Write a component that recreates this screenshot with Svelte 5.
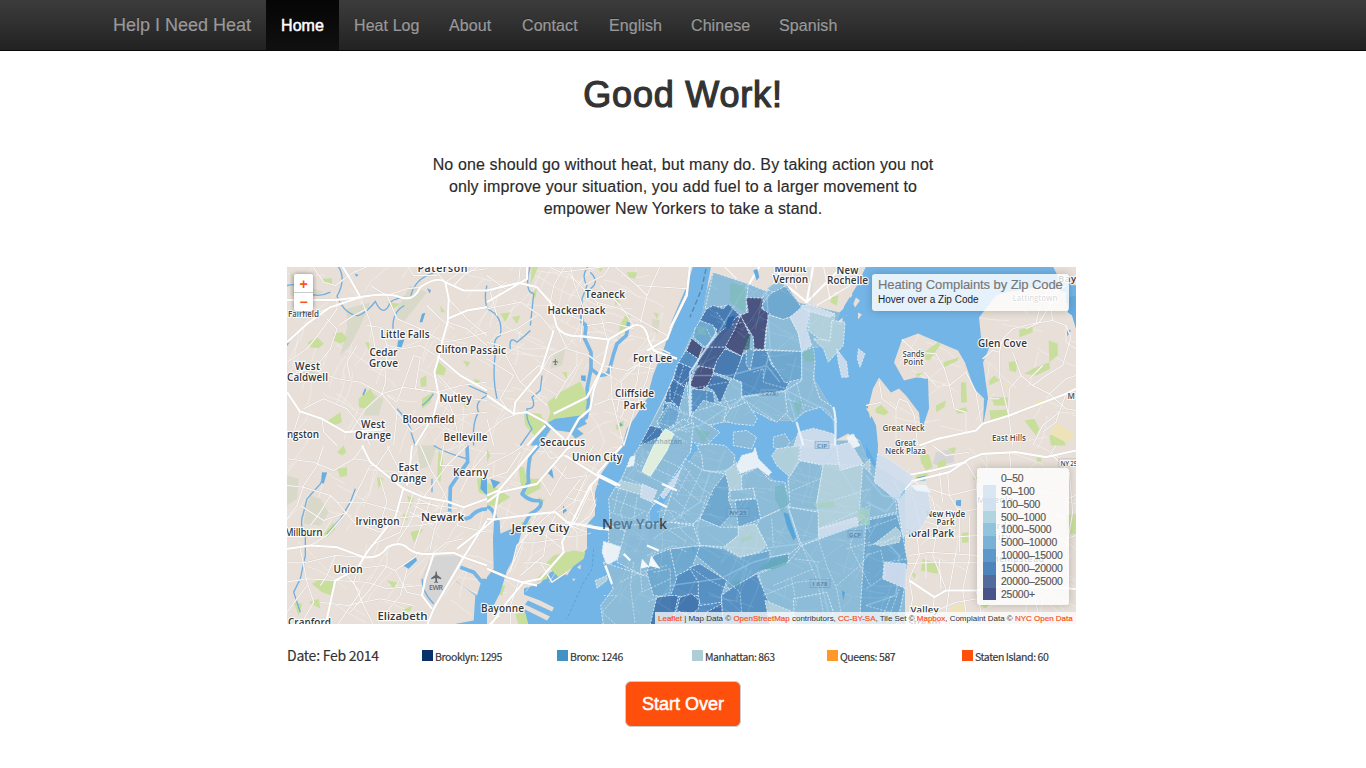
<script>
  // Label, and the width from its text's start to the next one's
  const nav = [['Home', 73], ['Heat Log', 95], ['About', 73], ['Contact', 87], ['English', 82], ['Chinese', 88], ['Spanish', 88]];

  const boroughs = [
    ['Brooklyn: 1295', '#08306b'],
    ['Bronx: 1246', '#4292c6'],
    ['Manhattan: 863', '#aecdd5'],
    ['Queens: 587', '#fe9929'],
    ['Staten Island: 60', '#ff4f0c']
  ];

  const scale = [
    ['0–50', '#f7f9fb'],
    ['50–100', '#d9e5f2'],
    ['100–500', '#d0dfee'],
    ['500–1000', '#acd3df'],
    ['1000–5000', '#8bc0da'],
    ['5000–10000', '#72aed4'],
    ['10000–15000', '#5591c6'],
    ['15000–20000', '#457db8'],
    ['20000–25000', '#486497'],
    ['25000+', '#3e4b83']
  ];

  // Fill per complaint level
  const W = '#f1f5f8', L = '#d0dded', G = '#b4d1dc', A = '#8dbcd8', B = '#6ea7cf', C = '#528dc1', D = '#4275af', E = '#465f91', F = '#434b7a';

  const bronxLand = 'M711 266H866L857 285L844 306L842 325L833 322L828 345L811 348L815 380L833 410L813 405L795 420L770 420L755 410L730 422L718 422L690 442L674 470L650 510L648 545L636 552L624 555L605 563L604 545L609 540L610 495L615 488L640 445L665 395L690 338L702 315Z';
  const islandLand = 'M979 317L981 337L991 343L983 362L988 398L983 425L984 398L974 388L965 362L958 350L939 342L918 333L902 339L894 362L904 380L916 377L928 378L929 408L921 432L919 412L906 395L899 388L891 392L879 377L873 388L868 408L876 425L878 445L877 470L866 455L860 440L848 433L835 440L825 430L800 433L787 445L798 458L788 475L787 485L777 483L767 473L737 465L733 452L710 445L695 452L683 472L660 510L657 545L642 562L627 560L625 568L610 592L602 608L604 624H1076V315L1066 302V292L1046 285L1006 292L996 295Z';

  // Each tile is drawn on its own 600 x 540 grid, a third of a pixel per unit
  const tiles = [
    {
      x: 287, y: 265,
      sage: ['180 130 250 110 220 180 190 240 160 270 180 190', '30 290 100 290 90 340 30 350', '250 380 290 400 275 450 230 450', '10 20 60 60 110 80 60 100 10 90', '370 60 420 80 350 170 320 150'],
      park: ['62 230 90 215 110 235 95 248 70 245', '138 205 165 200 182 220 160 235 140 225', '450 285 478 310 470 330 445 325', '215 400 250 370 265 395 235 430 215 425', '115 470 160 440 165 470 140 480', '405 400 440 380 430 410 405 430', '528 285 550 290 540 305', '400 340 418 330 418 362 402 364', '300 110 340 115 320 130', '460 120 475 140 462 140', '105 40 135 38 135 60 110 52', '235 230 248 230 245 255', '560 340 580 345 570 362', '525 400 545 410 535 430'],
      lake: ['333 225 352 222 342 250 330 252', '405 145 415 142 406 170 398 170', '420 68 432 74 428 84', '203 25 215 28 208 34', '234 368 238 372 230 390 226 388'],
      river: ['M152 0Q180 40 150 92Q175 150 215 150Q240 140 265 108Q290 160 310 110Q340 90 370 98Q380 40 440 22', 'M0 60Q40 50 55 78Q90 100 130 80', 'M352 120Q315 140 318 190', 'M600 60Q590 90 600 130', 'M600 390Q560 410 575 440Q555 470 560 540', 'M440 385Q420 410 405 420', 'M330 430Q370 470 375 510L385 540', 'M545 360L600 385M0 240L10 220'],
      major: ['M0 104L150 103L220 95Q300 80 340 95Q380 110 400 65Q450 30 475 50L530 75L600 75', 'M165 0L195 50L220 95', 'M475 50L485 100L482 170L465 230L455 275L442 320L455 390L440 450L385 540', 'M482 160L540 135L600 125', 'M0 380L38 437L105 460L175 500L290 492', 'M455 275L520 330L600 375', 'M0 230L60 175L130 125L220 95'],
      minor: ['M75 0L110 50L145 60L200 20L250 0', 'M150 103L150 130L100 200L60 250L0 290', 'M155 180L200 150L240 130', 'M120 160L150 190L130 250L90 300', 'M0 330L70 310L150 340L220 350L285 385L330 440L375 500', 'M220 95L250 170L265 250L250 300', 'M240 180L280 185L300 240L295 350L285 385L235 430L190 500', 'M300 90L330 160L400 190L470 230', 'M380 270L355 340L330 410L300 390', 'M380 270L400 275L385 370L450 380', 'M285 385L350 365L450 380L520 360L600 350', 'M360 0L380 30L450 30', 'M475 50L520 20L600 10', 'M475 50L430 0', 'M485 100L540 160L600 210', 'M482 170L540 190L600 240', 'M470 230L530 220L600 200', 'M40 437L20 500L0 520', 'M50 430L110 400L180 430L220 480L250 540', 'M105 460L110 500L150 540', 'M330 440L320 540', 'M375 500L420 470L500 450L600 440', 'M440 450L480 490L560 520L600 500', 'M480 400L500 450L520 540', 'M455 330L500 380L550 400L600 405', 'M300 240L350 250L400 240L455 275', 'M0 150L70 150L120 130', 'M210 240L180 290L190 340', 'M420 120L460 160L500 190', 'M250 60L300 90L360 70L400 65', 'M500 60L530 30L580 0']
    },
    {
      x: 487, y: 265,
      sage: ['495 160 520 165 510 205 495 190', '200 270 235 250 225 300 190 310'],
      park: ['182 410 220 380 280 348 295 380 305 420 290 460 230 455 180 470 190 440', '110 440 160 445 190 500 150 520 115 480', '415 150 430 150 415 190 395 215 398 180', '420 20 450 20 445 40 425 35', '75 155 100 150 90 175', '40 145 70 140 55 170', '330 0 350 5 340 20', '385 480 410 465 410 480 390 495', '225 320 240 320 240 340', '380 90 400 110 385 120', '500 140 515 145 510 160', '135 0 155 0 130 60', '135 80 150 70 145 100'],
      lake: ['282 330 296 330 296 348 283 345', '400 470 408 480 398 482', '235 460 250 470 240 480'],
      river: ['M0 130Q50 150 40 210Q15 220 25 260Q15 340 30 400', 'M70 250Q65 210 90 230Q115 210 130 195', 'M165 330L160 375L135 395Q150 430 120 430Q115 460 135 490L100 540', 'M305 0Q280 30 300 60L285 100L285 130', 'M130 0Q110 80 140 85L130 180', 'M310 20Q340 50 310 70'],
      wide: ['M283 130L285 170L297 180L293 220L312 260L312 310L300 370L305 410L298 455L275 475', 'M425 170L418 210L390 235L380 265L365 320L350 330', 'M312 310L335 328L350 330'],
      water: ['205 460 280 450 300 475 270 490 290 505 265 520 250 500 190 492 160 540 130 540 175 475'],
      major: ['M0 75L95 52L150 65L190 110L210 185Q230 215 280 212L365 222Q400 200 440 180Q475 170 485 225L500 255L570 280', 'M365 222L350 290L320 375L310 430L275 460L230 540', 'M0 390L80 445L120 440L175 470L230 520', 'M175 480L120 540', 'M200 195L160 320L85 410L80 450', 'M200 445L300 395L345 310', 'M600 85L555 180L540 220L480 255', 'M120 0L120 40L0 110'],
      minor: ['M55 70L0 30', 'M95 52L100 0', 'M190 110L200 60L235 0', 'M190 110L250 150L285 165', 'M210 185L240 250L305 270L345 300', 'M250 30L300 80L330 110L400 130L470 170L540 210', 'M250 0L260 50L290 130L280 230', 'M180 0L220 20L380 0', 'M380 0L450 60L480 90L520 0', 'M450 60L600 70', 'M440 180L400 120L340 60', 'M480 90L460 170', 'M330 110L360 220', 'M300 180L370 170L440 190', 'M0 130L100 110L160 150L200 200', 'M30 210L90 190L150 150', 'M0 230L40 240L100 350L180 420', 'M100 350L155 300L235 350L205 400', 'M160 320L190 270L240 245', 'M235 350L270 300L270 260', 'M345 300L420 315L500 270', 'M350 320L400 350L450 300L500 310', 'M370 300L375 400L385 440L410 540', 'M405 350L390 440', 'M500 255L480 340L440 440L410 540', 'M460 280L450 350L400 460', 'M320 420L370 400L450 410', 'M0 500L50 460L80 450', 'M0 460L20 540', 'M290 60L350 30L370 0', 'M30 150L10 80L60 50', 'M480 255L520 250L550 265', 'M0 280L80 330L40 400L60 430']
    },
    {
      x: 287, y: 445,
      sage: ['70 150 100 160 125 200 100 240 50 235 60 180', '0 90 35 100 30 160 0 180', '390 0 450 0 430 60 400 70'],
      park: ['150 70 180 65 180 90 160 95', '150 20 170 0 178 20 165 30', '110 265 140 230 145 250 120 275', '350 205 365 210 360 225 345 220', '75 415 100 400 140 405 135 450 105 440', '270 95 290 100 275 130', '455 10 468 45 460 110 450 100', '360 150 380 160 370 185', '20 470 45 475 35 510', '570 100 600 95 600 150 575 140', '300 405 330 410 320 430', '345 495 375 480 370 498', '370 260 410 250 380 290', '65 470 95 460 100 490'],
      lake: ['105 80 120 82 110 115 102 110', '348 360 385 330 390 345 365 370', '583 98 600 95 600 150 580 130'],
      river: ['M118 80L100 115L60 160L50 200Q35 240 55 270L55 330L40 400L20 440L40 500', 'M205 130L190 170L160 220L120 265', 'M440 0Q470 20 540 40', 'M435 100L435 140', 'M405 400Q405 440 440 475'],
      wide: ['M540 0L542 50L520 80L490 125L488 200', 'M600 190Q570 190 550 215L530 222', 'M520 365L560 380L585 410'],
      water: ['505 405 565 450 560 525 480 540 600 540 600 400 585 400 570 450 510 410'],
      gray: ['425 345 450 330 520 330 525 350 440 480 405 460 405 400'],
      major: ['M0 310L70 300L150 305L230 335Q280 340 300 305Q340 285 365 310Q390 330 440 325L500 322L530 335L600 360', 'M225 0L250 50L300 90L350 130L410 155L480 168L530 185L600 160', 'M350 125L325 215L240 320L210 370L145 405L115 540', 'M600 225L530 335L440 490L420 540', 'M440 325L415 400L405 450L435 490', 'M360 120L370 50L375 0', 'M600 240L510 310'],
      minor: ['M0 40L80 50L140 75L200 40L240 45', 'M0 120L50 125L130 150L150 170L230 170L340 200', 'M110 0L90 60L50 120L30 180L0 220', 'M230 0L200 40', 'M250 60L220 120L180 200L120 270L70 300', 'M150 170L200 230L280 260L325 215', 'M280 100L300 170L280 230', 'M340 170L420 175L510 190', 'M320 220L400 210L490 200', 'M320 245L400 240L450 230', 'M380 140L340 260L250 300', 'M400 155L370 230L330 290', 'M430 165L400 250L380 310', 'M470 170L440 260L430 310', 'M380 180L450 215M390 160L465 190M370 200L440 240', 'M300 0L330 60L360 120', 'M400 0L430 70L470 140L480 168', 'M470 0L460 60L500 60', 'M410 155L480 60L540 0', 'M0 350L60 350L145 330L230 335', 'M0 410L60 400L145 405', 'M145 330L120 390L100 420', 'M40 310L60 410L80 470L40 540', 'M60 420L0 500', 'M210 370L290 360L325 375L390 330', 'M230 335L200 410L230 480L260 540', 'M145 405L240 410L300 430L400 420', 'M180 390L220 440L150 540', 'M300 305L300 360L250 430L190 500', 'M325 375L360 440L405 450', 'M360 370L340 450L280 520', 'M100 470L180 480L280 460L380 480', 'M435 325L480 290L530 280', 'M530 185L510 240L600 260', 'M310 0L270 60L250 60', 'M600 20L550 80L520 140', 'M130 150L100 200L70 240', 'M180 200L110 225L40 180']
    },
    {
      x: 487, y: 445,
      park: ['200 330 260 315 295 320 290 340 215 395 175 355', '95 60 110 65 120 100 160 100 160 130 110 155 100 110', '0 110 40 135 70 155 30 180 0 180', '35 420 55 420 45 450 30 445', '145 400 185 370 180 400 150 410', '0 10 10 30 0 50', '85 505 115 500 125 540 95 540', '225 190 240 180 235 200', '100 230 130 230 120 245', '155 155 175 165 155 175'],
      lake: ['228 180 240 195 228 205', '10 100 40 110 20 130', '180 80 200 100 195 70'],
      wide: ['M155 0L130 30Q120 80 125 110L105 145Q130 170 160 165', 'M160 165Q170 185 130 205L105 250', 'M0 184Q25 190 28 240L25 290'],
      water: ['22 215 38 225 40 265 85 245 108 240 98 280 85 330 60 375 40 440 20 480 0 500 0 395 20 370 18 280'],
      major: ['M0 150L35 135L150 0', 'M0 170L40 140L150 115L240 10L260 0', 'M0 220L20 222L150 205L205 200L240 230L340 250L370 250', 'M0 370L60 395L105 410L150 420', 'M235 30L330 90L400 125', 'M340 90L310 120L225 290L230 320L160 400L110 410', 'M0 240L20 222L35 135', 'M110 410L60 470L10 540', 'M330 85L405 0'],
      minor: ['M0 60L80 20L110 0', 'M0 100L60 80L100 20', 'M165 0L190 40L235 30', 'M180 80L160 100L190 150L240 60', 'M200 60L240 100L300 90', 'M300 90L260 170L215 200', 'M280 100L220 180L170 220L90 300L70 380', 'M320 110L270 220L230 270', 'M300 140L260 130M290 170L240 155M270 220L250 200', 'M310 120L325 180L310 210L270 240', 'M240 230L270 260L270 310M250 240L300 260', 'M150 205L120 260L80 350L60 390', 'M205 210L180 260L170 330L100 390', 'M130 240L190 280L225 310', 'M100 290L150 290L225 280', 'M110 350L160 350L190 360', 'M95 410L70 480L70 540', 'M40 510L0 540', 'M160 350L195 410L240 380', 'M320 0L290 50L230 30']
    },
    {
      x: 866, y: 265,
      park: ['175 260 215 230 225 235 190 285 178 282', '232 290 278 275 275 285 235 305', '285 350 300 350 303 410 285 412', '28 430 45 418 68 440 55 450 30 442', '268 432 300 425 305 440 275 445', '210 420 240 405 235 425 210 440', '460 192 500 183 500 200 460 215', '428 290 455 285 450 320 430 315', '475 325 500 310 550 290 552 310 510 330', '370 345 385 330 400 345 370 360', '375 395 425 395 425 420 385 420', '370 435 425 432 425 455 375 465', '548 225 575 235 575 270 550 290', '475 465 505 460 520 490 510 510', '515 110 535 100 530 130', '550 510 580 500 600 540 555 540', '148 325 170 322 155 335'],
      sand: ['0 430 20 425 15 450', '360 142 378 140 375 150', '510 405 540 400 540 415 515 420', '415 358 428 355 425 375', '550 505 570 470 630 510 600 530', '325 395 335 390 335 405'],
      lake: ['600 190 615 195 605 212', '605 95 630 90 630 190 618 150 605 140'],
      major: ['M160 540L215 520L330 495L350 475L430 450L600 385L630 370'],
      minor: ['M108 222L150 260L210 265L235 310L250 360L210 362L175 320', 'M250 360L265 430L300 440L300 500', 'M250 360L275 340L300 320L330 380L345 470', 'M40 350L48 400L90 430L100 400L125 410L145 450L155 540', 'M90 430L90 540', 'M0 420L45 410', 'M440 260L465 330L430 370L428 450', 'M350 280L380 255L400 260L410 220L440 190L500 175L560 165L600 180L615 215L590 300L540 330L500 360', 'M465 330L500 360L550 385L600 430L630 435', 'M480 190L520 170L560 110', 'M600 180L600 230L630 250', 'M400 260L400 330L428 450L440 540', 'M460 440L430 450', 'M600 385L580 440L530 480L500 540', 'M550 385L600 340L630 330', 'M510 175L520 130L550 60', 'M560 165L550 90L600 60', 'M370 400L400 400M490 340L530 300', 'M530 500L570 470L580 440']
    },
    {
      x: 866, y: 445,
      park: ['150 90 180 80 195 95 145 110', '215 50 240 40 240 70 215 75', '288 262 312 260 312 290 288 292', '160 10 190 30 200 65 180 75 165 50', '512 35 527 35 525 48 512 48', '600 210 630 205 630 265 600 265', '170 340 215 355 215 385 165 375', '345 480 370 475 360 490', '245 10 270 5 265 25', '135 380 150 385 145 400', '320 100 345 90 340 115'],
      sand: ['260 480 295 475 290 500 250 500', '135 470 155 475 145 490', '500 520 530 515 520 540'],
      gray: ['210 20 260 10 265 50 220 60 200 55'],
      lake: ['270 165 285 163 285 182 270 180', '0 0 28 50 25 80 0 60', '155 95 180 90 178 105 150 105'],
      major: ['M100 145L145 105L250 80L310 40L350 25L450 20L540 35L630 15', 'M130 405L205 455L240 435L330 435L420 420L630 430', 'M145 110L120 90L200 75L300 50'],
      minor: ['M430 20L435 70', 'M300 50L330 100L335 180', 'M190 130L250 150L335 130', 'M145 105L200 160L215 240L200 330L240 430', 'M245 85L250 150L280 200L280 320', 'M195 195L280 200L335 190', 'M190 280L335 270', 'M130 330L190 320L335 330', 'M125 355L200 350L335 350', 'M270 320L250 430L240 500', 'M310 210L310 340L290 435L300 500', 'M150 250L160 330L130 400', 'M130 400L140 460L120 540', 'M205 455L200 500L240 540', 'M150 20L180 0M200 0L240 30L310 20', 'M550 30L570 0M560 30L600 70', 'M335 460L270 470L200 500', 'M610 80L620 200L600 320L610 430', 'M600 160L630 150M600 280L630 270', 'M215 240L150 220M230 170L220 80', 'M330 435L350 520M500 430L520 520', 'M180 330L180 400M220 340L225 430']
    }
  ];

  const labels = [
    ['Paterson', 442.5, 271.5, 50, 10.5], ['Teaneck', 605, 297.5, 40, 10], ['Hackensack', 576.5, 313.5, 58, 10], ['Little Falls', 405, 337, 49, 10],
    ['Cedar', 383.5, 355.500, 28, 10], ['Grove', 383.5, 366.5, 29, 10], ['Clifton', 451.5, 352, 32, 10], ['Passaic', 488, 353.5, 36, 10],
    ['West', 307.5, 369.5, 25, 10], ['Caldwell', 307.5, 380.5, 41, 10], ['Nutley', 455.5, 401.5, 32, 10], ['Bloomfield', 428.5, 422.5, 52, 10], ['Belleville', 465.5, 440.5, 44, 10],
    ['West', 373, 427.5, 24, 10], ['Orange', 373, 438.5, 36, 10], ['ngston', 303, 437.5, 32, 10], ['East', 408.5, 470.5, 20, 10], ['Orange', 408.5, 481.5, 36, 10],
    ['Kearny', 470.5, 475.5, 35, 10], ['Newark', 442.5, 520.5, 43, 11.5], ['Irvington', 377.5, 524.5, 44, 10], ['Millburn', 303.5, 535.5, 38, 10], ['Union', 348, 572, 29, 10],
    ['Elizabeth', 402.5, 619, 50, 11.5], ['Cranford', 309.5, 625.5, 43, 10], ['Bayonne', 502.5, 611.5, 43, 10], ['Jersey City', 540.5, 531.5, 58, 11.5],
    ['Union City', 597, 460, 50, 10], ['Secaucus', 562.5, 445.5, 45, 10], ['Fort Lee', 652.5, 361.5, 39, 10], ['Cliffside', 634.5, 396.5, 39, 10], ['Park', 634.5, 408, 22, 10],
    ['Mount', 790.5, 271.5, 32, 10], ['Vernon', 790.5, 282.5, 35, 10], ['New', 847.5, 273, 22, 10], ['Rochelle', 847.5, 283.5, 41, 10], ['Sands', 913.5, 356, 22, 8], ['Point', 913.5, 364, 20, 8],
    ['Glen Cove', 1002.5, 346.5, 49, 10], ['Great Neck', 903.5, 430, 42, 8], ['Great', 905.5, 445, 21, 8], ['Neck Plaza', 905.5, 453, 41, 8], ['East Hills', 1009, 440, 34, 8],
    ['Fairfield', 303.5, 316, 31, 8], ['Valley', 924.5, 612, 28, 9.5], ['Stream', 924.5, 625, 32, 9.5], ['Bay', 1067, 281, 18, 9.5], ['Ma', 1074, 398, 13, 8],
    ['Mineola', 995, 502, 36, 9], ['Garden', 1001, 528, 33, 9], ['City', 1001, 539, 19, 9], ['Hempstead', 1018, 561, 52, 9], ['Lattingtown', 1035, 300.5, 45, 8]
  ];
  const underLabels = [['New Hyde', 945.5, 516.5, 39, 8], ['Park', 945.5, 524.5, 18, 8], ['Floral Park', 928.5, 536.5, 51, 10]];

  const zips = [
    { x: 487, y: 265, shapes: [
      [C, '600 265 570 300 562 325 600 345 620 260'], [D, '565 330 600 345 600 390 580 375 560 415 533 408 540 380'],
      [A, '590 390 640 400 640 460 600 440 580 430'], [C, '560 415 580 420 570 450 525 455 530 415'], [B, '530 440 580 435 600 470 600 500 560 480 520 470'],
      [D, '490 480 530 490 510 530 495 560 455 545'], [B, '560 480 620 500 610 560 550 540']
    ] },
    { x: 670, y: 265, shapes: [
      [A, '130 20 235 55 228 150 200 145 170 120 105 130'], [A, '235 55 292 78 270 105 230 100'], [A, '290 70 330 40 345 60 320 85'],
      [B, '345 62 385 110 395 130 360 155 340 162 290 145 275 120 300 85'], [D, '110 130 130 120 160 130 175 115 200 140 210 150 130 250 140 190 90 165'],
      [E, '205 150 215 190 165 245 145 285 105 310 90 270 110 245 150 200 175 180'], [F, '228 96 280 98 275 130 300 145 288 190 282 252 252 250 250 215 210 150 235 140'],
      [F, '212 150 240 210 215 272 165 245 190 200'], [B, '75 190 90 165 130 180 140 210 105 245 70 215'], [F, '65 218 98 245 85 280 48 260'],
      [C, '48 255 85 280 70 310 25 290'], [D, '25 290 70 310 50 370 10 340'], [F, '90 300 130 308 128 350 90 375 60 360 75 315'], [E, '100 245 170 245 130 310 80 300'],
      [D, '165 250 215 272 210 300 190 340 130 320 140 285'], [C, '220 265 250 255 290 255 305 300 360 345 345 375 215 392 215 350 190 340'],
      [A, '295 148 340 162 360 155 385 200 395 258 285 252 290 190'], [B, '288 255 395 258 395 340 345 352 310 300'],
      [L, '360 155 395 125 420 130 410 190 425 240 395 258 385 205'], [G, '420 132 495 148 480 230 440 215 415 195'], [L, '395 120 420 118 495 145 480 155 410 135'],
      [G, '485 165 525 170 520 240 475 290 460 250 430 220 480 225'], [L, '500 250 530 290 535 335 515 335 505 290'], [L, '565 250 585 265 570 305 562 280'],
      [A, '395 258 430 245 435 290 430 340 450 400 490 425 500 470 450 425 400 440 370 470 345 440 345 375 395 345'],
      [A, '215 395 345 378 352 440 320 470 280 450 235 430'], [A, '170 350 190 340 215 355 215 400 180 430 160 390'], [D, '130 325 180 345 150 415 130 375 110 365'],
      [C, '65 370 110 375 130 380 135 410 100 430 65 445'], [A, '100 405 170 425 160 470 110 480 65 450'], [A, '180 430 230 410 262 460 250 480 195 475 160 465'],
      [D, '10 340 50 370 30 430 0 400 0 360'], [A, '50 350 60 450 45 480 15 470'], [B, '0 410 30 430 20 470 -20 500 -40 470'], [A, '-10 500 40 460 70 480 60 540 -30 560'],
      [A, '65 450 120 480 150 500 110 540 65 530'], [A, '190 500 230 495 260 515 245 550 190 540'], [A, '310 515 345 505 360 530 340 560 310 545'],
      [L, '385 500 430 488 490 505 500 545 370 545'], [W, '530 515 550 505 570 540 545 550'], [B, '230 245 252 255 240 315 228 295']
    ] },
    { x: 487, y: 445, shapes: [
      [A, '460 0 620 -70 610 20 560 90 500 180 480 140 400 110 425 50'], [W, '430 35 445 30 440 60 420 65'],
      [G, '400 105 465 120 465 150 385 130'], [A, '385 125 470 150 500 175 480 210 480 270 430 265 370 240 365 160'], [L, '465 115 510 135 495 170 460 155'],
      [A, '365 240 430 260 415 320 365 290'], [B, '425 265 485 278 475 320 410 315'], [W, '350 288 405 305 410 330 360 360 345 320'],
      [L, '585 65 590 85 530 160 520 150'], [G, '325 405 360 390 360 405 330 428']
    ] },
    { x: 670, y: 445, shapes: [
      [A, '80 0 120 -5 165 0 195 30 190 60 160 80 100 75 95 30'], [A, '45 40 100 75 165 85 135 130 120 180 70 235 0 230 -60 330 -40 270 10 130'],
      [B, '165 85 180 90 175 160 190 200 150 245 90 220 130 130'], [G, '165 80 200 50 205 85 220 95 215 135 180 135'],
      [A, '215 90 265 65 300 105 345 110 355 180 270 220 250 130 215 135'], [A, '180 135 250 128 255 158 180 165'], [B, '195 165 260 160 272 220 205 245'],
      [A, '70 235 90 220 150 245 205 245 205 270 160 305 95 300 65 270'],
      [A, '270 220 355 182 390 300 360 325 300 335 290 300 260 240'], [G, '320 10 390 0 385 50 360 95 320 60 305 30'], [A, '390 45 460 60 440 170 445 200 360 185 355 100'],
      [G, '205 245 255 235 290 300 270 318 210 335 163 305 205 270'],
      [L, '395 -20 500 0 508 75 460 58 388 45'], [G, '460 55 580 60 600 40 600 200 565 230 445 250 440 175'], [L, '500 0 540 -10 580 55 510 75'],
      [L, '445 250 560 215 565 240 447 280'], [A, '355 185 445 200 445 280 395 300'],
      [B, '95 300 163 310 210 335 300 315 300 335 355 325 355 350 265 380 180 435 150 390 65 320'], [B, '0 310 90 300 65 370 25 400 0 400'],
      [C, '60 365 90 355 170 405 155 450 155 500 85 490 80 455 0 420'], [A, '395 300 445 282 560 240 600 230 600 540 310 540 265 385 355 350'],
      [C, '180 430 260 385 300 480 300 540 155 540 155 450'], [C, '-5 455 25 450 85 450 90 480 155 470 155 540 0 540'], [A, '-130 240 0 230 70 240 90 300 0 310 -70 380 -80 390 -160 350'],
      [A, '-200 350 -80 390 0 400 0 540 -200 540 -208 480 -170 430'], [C, '0 400 60 370 85 410 85 450 0 455'], [B, '-50 330 0 310 20 400 0 455 -50 450 -70 380'], [D, '-40 455 0 450 25 450 15 500 0 540 -60 540'],
      [D, '30 455 65 445 88 465 85 490 60 510 20 495'], [D, '110 500 155 475 160 540 90 540'],
      [W, '200 60 215 30 250 20 255 5 265 40 305 80 295 90 262 65 210 85'], [G, '285 465 370 500 370 540 300 540'], [A, '370 460 470 440 490 500 470 540 375 540']
    ] },
    { x: 866, y: 445, shapes: [
      [A, '-10 60 20 90 90 170 92 200 0 220 -20 200'], [L, '35 25 60 35 145 95 105 145 95 165 25 110'], [L, '95 165 140 120 185 125 195 195 165 250 110 275'],
      [B, '0 225 92 205 110 270 125 350 115 430 105 480 90 540 -20 540'], [G, '25 295 90 245 105 262 100 290 45 302'], [L, '55 350 120 355 120 430 50 400'], [W, '135 120 180 118 195 140 150 135']
    ] }
  ];

  // Boundary lines of neighbouring zip codes, drawn over the fills
  const borders = [
    { x: 487, y: 445, d: 'M480 20L600 75M465 50L580 105M450 75L560 130M430 45L500 80M415 95L460 115M375 160L480 200M370 200L430 220L470 200M420 140L400 200L415 250M450 155L440 220L480 240M395 130L380 200M510 200Q560 180 600 230M500 280L540 250L600 290M480 330L560 300L600 320M440 350L430 420L445 540M400 410L460 380L540 360M460 370L465 440L550 400M350 450L390 450L345 500L390 540M500 380L550 370L550 440L480 470' },
    { x: 670, y: 445, d: 'M40 60L95 130L130 150M20 110L80 160L120 180M0 150L60 200M60 75L20 150M95 75L55 160L30 220M0 200L40 260L90 300M0 250L60 240M110 150L80 250L90 300M355 140L450 100M440 180L600 130M445 250L600 180M305 220L310 300M445 282L470 360L500 430L520 540M560 240L540 300L600 420M395 300L440 400L460 500M310 420L430 370M280 450L380 410L480 400M375 340L450 350M365 400L380 480M500 420L570 360L600 320M530 310L600 290M150 390L210 440L215 500M60 365L120 405L180 435' },
    { x: 670, y: 265, d: 'M0 420L60 450M10 380L50 400M30 360L60 330M65 440L200 400M110 380L110 430M170 350L60 370M220 400L320 470M250 320L280 310L280 350L350 370M140 140L170 180L220 170M110 190L125 220M20 470L60 500M0 500L40 530M350 400L440 430M380 350L400 430M80 480L120 530' },
    { x: 487, y: 265, d: 'M590 300L560 400L500 500L460 540M540 420L600 450M510 470L600 500M550 500L600 530M570 350L600 360' },
    { x: 866, y: 445, d: 'M0 250L100 215M10 300L115 270M0 330L45 315L60 390L0 430M60 350L125 340M60 540L100 430M0 480L70 500M45 300L90 270M40 540L75 450M135 130L165 250M105 145L80 100' }
  ];

  const motorways = [
    { x: 670, y: 445, d: 'M350 180L390 295L440 360L475 500M355 185L550 205L600 190M90 300L270 310L390 295L600 230M450 70L500 0M505 60L560 150L600 260M0 230L90 170L120 80L190 70M0 420L150 400L250 350L360 320' },
    { x: 670, y: 265, d: 'M60 450L60 320L140 210L230 60M0 500L90 480L220 395L350 375L450 425Q500 430 495 540M350 375L385 490L395 540M410 0L425 60L425 130L395 250L395 345L350 375M60 330L180 330L290 300L330 350M330 0L290 80L300 250L280 340' },
    { x: 866, y: 445, d: 'M0 90L50 150L100 160L145 105M0 170L60 200L120 120M0 300L60 290L100 330L90 450L0 480' }
  ];

  // Local street texture: short wandering lines at a fixed seed
  function streets(seed, x0, y0, x1, y1, n) {
    let s = seed;
    const rnd = () => ((s = (s * 16807) % 2147483647) / 2147483647);
    let d = '';
    for (let i = 0; i < n; i++) {
      let x = x0 + rnd() * (x1 - x0);
      let y = y0 + rnd() * (y1 - y0);
      let a = (rnd() > 0.5 ? -1.05 : 0.4) + (rnd() - 0.5) * 0.7;
      d += `M${x.toFixed(1)} ${y.toFixed(1)}`;
      for (let k = 0; k < 3; k++) {
        const l = 6 + rnd() * 13;
        x += Math.cos(a) * l;
        y += Math.sin(a) * l;
        a += (rnd() - 0.5) * 0.6;
        d += `L${x.toFixed(1)} ${y.toFixed(1)}`;
      }
    }
    return d;
  }
  const localWest = streets(71, 280, 265, 670, 625, 250);
  const localEast = streets(913, 870, 290, 1076, 625, 75);
  const localZip = streets(377, 600, 270, 905, 625, 300);
  const at = (t) => `translate(${t.x} ${t.y}) scale(.33333)`;
</script>

<nav>
  <div class="bar">
    <a class="brand" href="#top">Help I Need Heat</a>
    {#each nav as [item, width], i}
      <a class:active={i === 0} href="#top" style="width:{width}px">{item}</a>
    {/each}
  </div>
</nav>

<main>
  <h1>Good Work!</h1>
  <p>No one should go without heat, but many do. By taking action you not<br />only improve your situation, you add fuel to a larger movement to<br />empower New Yorkers to take a stand.</p>

  <section class="map">
    <svg class="canvas" viewBox="287 266.5 789 357" width="789" height="357" aria-label="Heating complaints map">
      <defs>
        <clipPath id="west"><path d="M280 260H693L687 285L665 345L647 398L622 445L600 475L595 515L587 548L567 575L524 592L480 625H280Z" /></clipPath>
        <clipPath id="east"><path d="M979 317L981 337L991 343L983 362L988 398L983 425L984 398L974 388L958 350L918 333L902 339L894 362L904 380L928 378L929 408L921 432L919 412L899 388L879 377L868 408L878 445L876 470L930 500L905 625H1076V315L1066 292L1046 285L1006 292Z" /></clipPath>
        <clipPath id="zone"><path d="M713 272L765 291L787 285L798 302L840 312L830 345L815 370L833 405L833 440L862 440L876 465L930 500L905 540V624H604L604 600L625 568L605 563L610 495L640 445L670 388L690 338Z" /></clipPath>
        <clipPath id="city"><path d={bronxLand} /><path d={islandLand} /></clipPath>
      </defs>

      <rect x="287" y="266" width="789" height="358" fill="#e7dfd8" />
      <path fill="#73b5e6" d="M693 266L687 285L672 320L665 345L659 360L653 375L647 398L635 417L627 428L622 445L610 461L600 475L595 492L595 515L587 524L587 548L577 560L567 575L557 568L550 572L540 583L524 588L524 594L540 600L554 607L552 611L528 600L525 604L550 616L547 620L521 607V624H1076V266Z" />
      <path fill="#e7dfd8" d={bronxLand} />
      <path fill="#e7dfd8" d={islandLand} />
      <path fill="#e7dfd8" d="M1053 266H1076V285L1060 280ZM847 290L860 300L855 307ZM858 312L862 314L858 319ZM868 405L875 410L870 418Z" />
      <g clip-path="url(#west)"><path class="local" d={localWest} /></g>
      <g clip-path="url(#east)"><path class="local" d={localEast} /></g>

      {#each tiles as t}
        <g transform={at(t)}>
          {#each t.sage ?? [] as p}<polygon points={p} fill="#d8d9c8" />{/each}
          {#each t.gray ?? [] as p}<polygon points={p} fill="#d6d5d5" />{/each}
          {#each t.park ?? [] as p}<polygon points={p} fill="#c7df9b" />{/each}
          {#each t.sand ?? [] as p}<polygon points={p} fill="#eee3b8" />{/each}
          {#each t.lake ?? [] as p}<polygon points={p} fill="#65ace1" />{/each}
          {#each t.water ?? [] as p}<polygon points={p} fill="#73b5e6" />{/each}
          {#each t.river ?? [] as d}<path {d} class="river" />{/each}
          {#each t.wide ?? [] as d}<path {d} class="wide" />{/each}
          {#each t.minor as d}<path {d} class="casing thin" />{/each}
          {#each t.major as d}<path {d} class="casing" />{/each}
          {#each t.minor as d}<path {d} class="minor" />{/each}
          {#each t.major as d}<path {d} class="major" />{/each}
        </g>
      {/each}

      <!-- Westchester -->
      <g transform="translate(670 265) scale(.33333)">
        <path class="casing" d="M0 190L50 90L60 0" />
        <path class="major" d="M270 0L235 60M330 20L310 60M350 60L410 110L430 0M410 110L490 30L520 0M0 190L50 90L60 0" />
        <path class="minor" d="M460 0L480 100L500 80M540 0L500 60M160 0L200 40M380 70L360 0M440 120L540 60" />
        <polygon points="485 95 505 90 500 120 480 110" fill="#c7df9b" />
        <polygon points="525 125 540 120 530 150 518 150" fill="#c7df9b" />
        <polygon points="250 15 262 10 268 35 260 45" fill="#65ace1" />
        <path d="M108 10L95 70L60 155" fill="none" stroke="#5689ae" stroke-width="4" stroke-dasharray="16 8" />
        <path fill="#73b5e6" d="M600 60L550 85L520 130L490 160L500 170L540 140L560 90Z" />
      </g>

      {#each underLabels as [t, x, y, w, s]}
        <text class="place" {x} {y} textLength={w} font-size={s}>{t}</text>
      {/each}

      <g clip-path="url(#zone)"><g clip-path="url(#city)"><rect x="600" y="266" width="305" height="358" fill={A} /></g></g>
      {#each zips as z}
        <g transform={at(z)} class="zips">
          {#each z.shapes as [fill, points]}<polygon {points} {fill} />{/each}
        </g>
      {/each}
      <g clip-path="url(#zone)"><g clip-path="url(#city)"><path d={localZip} fill="none" stroke="#d4ebf7" stroke-width=".6" opacity=".25" /></g></g>
      {#each motorways as m}
        <path transform={at(m)} d={m.d} fill="none" stroke="#b4dcf4" stroke-width="4.5" opacity=".4" />
      {/each}
      {#each borders as b}
        <path transform={at(b)} d={b.d} class="border" />
      {/each}
      <g transform="translate(670 445) scale(.33333)">
        <path fill="#58a5d9" d="M340 200L355 205L378 275L370 285L350 240ZM65 300L75 310L72 325ZM515 435L525 440L520 465Z" />
        <path fill="#5faab6" opacity=".7" d="M265 370L310 340L355 330L350 355L310 372ZM190 410L215 405L200 425Z" />
        <path fill="#74b3c4" opacity=".7" d="M315 125L340 115L360 170L335 200L315 160Z" />
        <path fill="#a5d1bd" opacity=".7" d="M430 175L490 165L495 185L440 188ZM210 280L240 270L250 280L215 290ZM560 190L600 190L600 240L575 240Z" />
      </g>
      <g transform="translate(670 265) scale(.33333)">
        <path fill="#7dbbb4" opacity=".6" d="M180 55L225 60L225 140L180 110ZM395 265L430 245L435 285L405 290ZM75 490L120 500L100 535ZM370 410L400 405L385 450ZM80 180L100 185L110 210L85 205Z" />
        <path fill="#38606e" opacity=".7" d="M225 210L242 205L238 250L222 255Z" />
        <path fill="#2e64a5" d="M175 155L195 150L180 190L165 185Z" />
        <path fill="none" stroke="#f3f9fc" stroke-width="7" d="M490 425Q500 450 495 540M380 470L400 540" opacity=".8" />
        <path fill="none" stroke="#e3f1f9" stroke-width="5" d="M60 450L60 320L140 200" opacity=".75" />
      </g>
      <g transform="translate(487 445) scale(.33333)">
        <!-- Central Park -->
        <polygon points="500 0 535 -50 560 -35 540 15 490 92 465 78" fill="#e0eedd" stroke="#f2f8f4" stroke-width="2.5" />
        <polygon points="465 340 485 362 492 330 520 370 490 362 460 370" fill="#f4f7f9" />
        <path fill="none" stroke="#f7fbfd" stroke-width="7" d="M330 85L400 120M500 165L540 185M480 300L515 315M355 360L375 415M410 325L430 345M525 115L570 135M235 230L365 252" />
        <path fill="none" stroke="#4c98ce" stroke-width="2" stroke-dasharray="9 6" d="M320 310L315 370L285 420L240 520" />
        <path fill="#e4ded5" d="M270 365L282 357L280 372ZM255 400L266 400L260 407Z" />
      </g>
      <text x="634.5" y="528.5" textLength="65" class="city">N<tspan fill="#4b7491">ew Yor</tspan>k</text>
      <text x="663" y="443.5" textLength="38" class="district">Manhattan</text>

      {#each labels as [t, x, y, w, s]}
        <text class="place" class:small={s <= 8} {x} {y} textLength={w} font-size={s}>{t}</text>
      {/each}
      <g class="shield">
        <text x="758.5" y="321" textLength="12">BRP</text>
        <rect x="760" y="388" width="18" height="7" /><text x="769" y="394.5" textLength="14">I 278</text>
        <rect x="815" y="441" width="14" height="7" /><text x="822" y="447.5" textLength="10">CIP</text>
        <rect x="727" y="508" width="22" height="8" /><text x="738" y="514.8" textLength="17">NY 25</text>
        <rect x="848" y="530" width="14" height="7" /><text x="855" y="536.5" textLength="12">GCP</text>
        <rect x="810" y="579" width="20" height="8" /><text x="820" y="585.8" textLength="15">I 678</text>
      </g>
      <rect x="1059" y="458.5" width="22" height="7.5" fill="#f5f2ef" stroke="#aaa" stroke-width=".6" />
      <text class="place small" x="1069" y="465" textLength="17" font-size="6.5">NY 25</text>
      <text x="436" y="589" text-anchor="middle" class="airport" textLength="14">EWR</text>
      <path fill="#62656a" d="M435.7 571h1l.5 3.5 4 3v1.2l-4-1.2-.3 3.3 1.3 1v.8l-2-.5-2 .5v-.8l1.3-1-.3-3.3-4 1.2v-1.2l4-3z" />
      <path fill="#707276" d="M555 358.5h.7l.3 2 2.2.8v.7l-2.2-.2-.2 1.6 1 .7v.4h-2.8v-.4l1-.7-.2-1.6-2.2.2v-.7l2.2-.8z" />
    </svg>

    <div class="zoom"><span>+</span><span>−</span></div>
    <div class="info"><h4>Heating Complaints by Zip Code</h4><div>Hover over a Zip Code</div></div>
    <div class="legend">
      {#each scale as [label, color]}
        <div><i style="background:{color}"></i><b>{label}</b></div>
      {/each}
    </div>
    <div class="credit">
      <span><b>Leaflet</b> | Map Data © <b>OpenStreetMap</b> contributors, <b>CC-BY-SA</b>, Tile Set © <b>Mapbox</b>, Complaint Data © <b>NYC Open Data</b></span>
    </div>
  </section>

  <div class="counts">
    <strong>Date: Feb 2014</strong>
    {#each boroughs as [label, color]}
      <span><i style="background:{color}"></i>{label}</span>
    {/each}
  </div>

  <button>Start Over</button>
</main>

<style>
  :global(body) {
    margin: 0;
    background: #fff;
    color: #333;
    font-family: 'Liberation Sans', Arial, sans-serif;
    overflow: hidden;
  }
  nav {
    height: 50px;
    border-bottom: 1px solid #080808;
    background: linear-gradient(#3c3c3c, #222);
  }
  .bar { display: flex; height: 50px; padding-left: 98px; }
  nav a {
    box-sizing: border-box;
    padding-left: 15px;
    color: #999;
    text-decoration: none;
    font-size: 16px;
    line-height: 51px;
    letter-spacing: 0.08px;
    white-space: nowrap;
    text-shadow: 0 -1px 0 rgba(0, 0, 0, 0.25);
    -webkit-text-stroke: 0.2px #999;
  }
  nav .brand { width: 168px; font-size: 18px; line-height: 50px; letter-spacing: 0; }
  nav .active {
    background: linear-gradient(#050505, #101010);
    color: #fff;
    -webkit-text-stroke: 0.5px #fff;
  }
  main { display: flex; flex-direction: column; align-items: center; }
  h1 {
    margin: 24px 0 0;
    font-size: 36px;
    line-height: 40px;
    font-weight: 400;
    letter-spacing: 0.8px;
    -webkit-text-stroke: 1.2px #333;
  }
  p {
    margin: 39px 0 0;
    font-size: 16px;
    line-height: 22px;
    letter-spacing: 0.13px;
    text-align: center;
    white-space: nowrap;
    color: #2b2b2b;
    -webkit-text-stroke: 0.15px #2b2b2b;
  }
  .map {
    position: relative;
    width: 789px;
    height: 357px;
    margin: 47px 3px 0 0;
    overflow: hidden;
  }
  .canvas { display: block; }
  .local { fill: none; stroke: #f8f5f2; stroke-width: 0.7; opacity: 0.8; }
  .river { fill: none; stroke: #70afe0; stroke-width: 4; }
  .wide { fill: none; stroke: #73b5e6; stroke-width: 11; stroke-linejoin: round; }
  .casing { fill: none; stroke: #d6cec7; stroke-width: 8; stroke-linejoin: round; }
  .casing.thin { stroke-width: 5; }
  .minor { fill: none; stroke: #fbf9f8; stroke-width: 3.2; stroke-linejoin: round; }
  .major { fill: none; stroke: #fff; stroke-width: 6.5; stroke-linejoin: round; }
  .zips polygon { stroke: #e6f2fa; stroke-width: 2.5; stroke-dasharray: 7 4; fill-opacity: 0.92; }
  .border { fill: none; stroke: #ddeef8; stroke-width: 2.5; stroke-dasharray: 7 4; opacity: 0.7; }
  .place, .city, .district {
    font-family: 'Open Sans', 'Noto Sans', sans-serif;
    font-weight: 600;
    text-anchor: middle;
    fill: #34373c;
  }
  .place {
    stroke: rgba(255, 255, 255, 0.85);
    stroke-width: 2.4px;
    stroke-linejoin: round;
    paint-order: stroke;
  }
  .place.small { fill: #4a4c50; stroke-width: 1.8px; }
  .city { font-size: 14px; opacity: 0.9; }
  .district { font-size: 7px; fill: #4b7491; opacity: 0.5; }
  .shield text { font: 600 6px 'Open Sans', sans-serif; text-anchor: middle; fill: #3f6d93; opacity: 0.8; }
  .shield rect { fill: #8fb9d8; fill-opacity: 0.5; stroke: #5c8fb8; stroke-width: 0.6; opacity: 0.7; }
  .airport { font: 600 7px 'Open Sans', sans-serif; fill: #65676b; }
  .zoom {
    position: absolute;
    left: 7px;
    top: 7px;
    width: 19px;
    height: 37px;
    border-radius: 2px;
    background: #fff;
    box-shadow: 0 0 4px rgba(0, 0, 0, 0.4);
    color: #f9531b;
    font-weight: 700;
    font-size: 14px;
    line-height: 20px;
    text-align: center;
  }
  .zoom span { display: block; height: 18px; }
  .zoom span + span { border-top: 1px solid #ccc; line-height: 18px; }
  .info, .legend {
    position: absolute;
    background: rgba(255, 255, 255, 0.81);
    box-shadow: 0 0 8px rgba(0, 0, 0, 0.2);
    border-radius: 3px;
    box-sizing: border-box;
  }
  .info { left: 585px; top: 7px; width: 197px; height: 37px; padding: 3px 6px; font-size: 10px; line-height: 14px; white-space: nowrap; color: #222; }
  .info h4 { margin: 0 0 1px; font-size: 13px; line-height: 15px; font-weight: 400; letter-spacing: -0.08px; color: #777; -webkit-text-stroke: 0.15px #777; }
  .legend { left: 690px; top: 201px; width: 92px; height: 137px; padding: 4px 6px; }
  .legend div { display: flex; height: 12.85px; }
  .legend i { flex: none; width: 13px; margin-right: 5px; opacity: 0.95; }
  .legend b { font-size: 10.4px; line-height: 13.6px; letter-spacing: -0.18px; font-weight: 400; color: #555; white-space: nowrap; -webkit-text-stroke: 0.15px #555; }
  .credit {
    position: absolute;
    right: 0;
    bottom: 0;
    width: 421px;
    height: 12px;
    padding-left: 3px;
    box-sizing: border-box;
    background: rgba(255, 255, 255, 0.75);
    font-size: 8px;
    line-height: 13px;
    letter-spacing: -0.01px;
    white-space: nowrap;
    color: #333;
  }
  .credit b { color: #f9531b; font-weight: 400; -webkit-text-stroke: 0.2px #f9531b; }
  .counts {
    display: flex;
    align-items: center;
    width: 789px;
    height: 20px;
    margin: 21px 3px 0 0;
    font-family: 'Noto Sans CJK SC', sans-serif;
    font-size: 10.5px;
    line-height: 20px;
    letter-spacing: -0.42px;
    -webkit-text-stroke: 0.15px #333;
  }
  .counts strong { flex: none; width: 135px; font-size: 14px; font-weight: 400; letter-spacing: -0.25px; }
  .counts span { flex: none; display: flex; align-items: center; width: 135px; padding-top: 3px; white-space: nowrap; }
  .counts i { width: 11px; height: 11px; margin: -3px 2px 0 0; }
  button {
    width: 116px;
    height: 46px;
    margin: 16px 0 0;
    padding: 0;
    border: 1px solid #ccc;
    border-radius: 6px;
    background: #ff4f0c;
    color: #fff;
    font: 18px/44px 'Liberation Sans', Arial, sans-serif;
    -webkit-text-stroke: 0.5px #fff;
  }
</style>
